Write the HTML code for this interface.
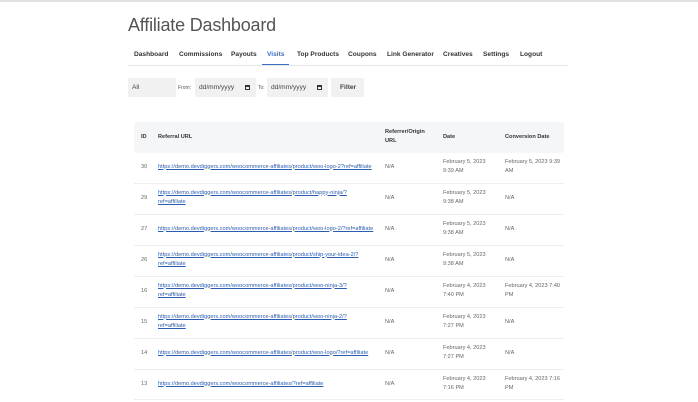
<!DOCTYPE html><html><head><style>
*{margin:0;padding:0;box-sizing:border-box}
body{width:698px;height:400px;background:#fff;font-family:"Liberation Sans",sans-serif;color:#333;position:relative;overflow:hidden}
#w{position:absolute;left:0;top:1.5px;width:698px;height:400px}
.a{position:absolute;white-space:nowrap}
h1{position:absolute;left:128px;top:13px;font-size:18px;font-weight:normal;color:#555;letter-spacing:-.2px}
.nav{position:absolute;top:49px;font-size:6.6px;font-weight:bold;color:#333}
.navline{position:absolute;left:128px;top:63px;width:440px;height:1px;background:#e6e6e6}
.box{position:absolute;top:76px;height:19px;background:#f1f1f1;font-size:6.6px;line-height:19px;padding-left:4px;color:#444}
.thead{position:absolute;left:134px;top:120px;width:430px;height:31px;background:#f5f6f7;border-radius:3px}
.t{position:absolute;font-size:5.6px;line-height:9.5px;color:#666;white-space:nowrap}
.h{font-weight:bold;color:#333}
.u{color:#2a5db0;text-decoration:underline;letter-spacing:.02px}
.sep{position:absolute;left:134px;width:430px;height:1px;background:#eee}
</style></head><body>
<div style="position:absolute;left:0;top:0;width:698px;height:2px;background:#e2e2e2"></div>
<div id="w">
<h1>Affiliate Dashboard</h1>
<div class="nav" style="left:134px">Dashboard</div>
<div class="nav" style="left:179px">Commissions</div>
<div class="nav" style="left:231px">Payouts</div>
<div class="nav" style="left:267px;color:#3a6fc4">Visits</div>
<div style="position:absolute;left:262px;top:62px;width:27px;height:2px;background:#3a6fc4"></div>
<div class="nav" style="left:297px">Top Products</div>
<div class="nav" style="left:348px">Coupons</div>
<div class="nav" style="left:387px">Link Generator</div>
<div class="nav" style="left:443px">Creatives</div>
<div class="nav" style="left:483px">Settings</div>
<div class="nav" style="left:520px">Logout</div>
<div class="navline"></div>
<div class="box" style="left:128px;width:48px">All</div>
<div class="a" style="left:178px;top:83px;font-size:5px;color:#555">From:</div>
<div class="box" style="left:195px;width:61px">dd/mm/yyyy <span style="position:absolute;left:50px;top:7px;width:5px;height:5px;border:1px solid #333;border-top-width:2px"></span></div>
<div class="a" style="left:258px;top:83px;font-size:5px;color:#555">To:</div>
<div class="box" style="left:267px;width:61px">dd/mm/yyyy <span style="position:absolute;left:50px;top:7px;width:5px;height:5px;border:1px solid #333;border-top-width:2px"></span></div>
<div class="box" style="left:331px;width:33px;font-weight:bold;padding-left:9px">Filter</div>
<div class="thead"></div>
<div class="t h" style="left:141px;top:131px">ID</div>
<div class="t h" style="left:158px;top:131px">Referral URL</div>
<div class="t h" style="left:385px;top:126px">Referrer/Origin<br>URL</div>
<div class="t h" style="left:443px;top:131px">Date</div>
<div class="t h" style="left:505px;top:131px">Conversion Date</div>

<div class="t" style="left:141px;top:161px">30</div>
<div class="t u" style="left:158px;top:161px">https://demo.devdiggers.com/woocommerce-affiliates/product/woo-logo-2?ref=affiliate</div>
<div class="t" style="left:385px;top:161px">N/A</div>
<div class="t" style="left:443px;top:156px">February 5, 2023<br>9:39 AM</div>
<div class="t" style="left:505px;top:156px">February 5, 2023 9:39<br>AM</div>
<div class="sep" style="top:181px"></div>

<div class="t" style="left:141px;top:192px">29</div>
<div class="t u" style="left:158px;top:187px">https://demo.devdiggers.com/woocommerce-affiliates/product/happy-ninja/?<br>ref=affiliate</div>
<div class="t" style="left:385px;top:192px">N/A</div>
<div class="t" style="left:443px;top:187px">February 5, 2023<br>9:38 AM</div>
<div class="t" style="left:505px;top:192px">N/A</div>
<div class="sep" style="top:212px"></div>

<div class="t" style="left:141px;top:223px">27</div>
<div class="t u" style="left:158px;top:223px">https://demo.devdiggers.com/woocommerce-affiliates/product/woo-logo-2/?ref=affiliate</div>
<div class="t" style="left:385px;top:223px">N/A</div>
<div class="t" style="left:443px;top:218px">February 5, 2023<br>9:38 AM</div>
<div class="t" style="left:505px;top:223px">N/A</div>
<div class="sep" style="top:243px"></div>

<div class="t" style="left:141px;top:254px">26</div>
<div class="t u" style="left:158px;top:249px">https://demo.devdiggers.com/woocommerce-affiliates/product/ship-your-idea-2/?<br>ref=affiliate</div>
<div class="t" style="left:385px;top:254px">N/A</div>
<div class="t" style="left:443px;top:249px">February 5, 2023<br>9:38 AM</div>
<div class="t" style="left:505px;top:254px">N/A</div>
<div class="sep" style="top:274px"></div>

<div class="t" style="left:141px;top:285px">16</div>
<div class="t u" style="left:158px;top:280px">https://demo.devdiggers.com/woocommerce-affiliates/product/woo-ninja-3/?<br>ref=affiliate</div>
<div class="t" style="left:385px;top:285px">N/A</div>
<div class="t" style="left:443px;top:280px">February 4, 2023<br>7:40 PM</div>
<div class="t" style="left:505px;top:280px">February 4, 2023 7:40<br>PM</div>
<div class="sep" style="top:305px"></div>

<div class="t" style="left:141px;top:316px">15</div>
<div class="t u" style="left:158px;top:311px">https://demo.devdiggers.com/woocommerce-affiliates/product/woo-ninja-2/?<br>ref=affiliate</div>
<div class="t" style="left:385px;top:316px">N/A</div>
<div class="t" style="left:443px;top:311px">February 4, 2023<br>7:27 PM</div>
<div class="t" style="left:505px;top:316px">N/A</div>
<div class="sep" style="top:336px"></div>

<div class="t" style="left:141px;top:347px">14</div>
<div class="t u" style="left:158px;top:347px">https://demo.devdiggers.com/woocommerce-affiliates/product/woo-logo/?ref=affiliate</div>
<div class="t" style="left:385px;top:347px">N/A</div>
<div class="t" style="left:443px;top:342px">February 4, 2023<br>7:27 PM</div>
<div class="t" style="left:505px;top:347px">N/A</div>
<div class="sep" style="top:367px"></div>

<div class="t" style="left:141px;top:378px">13</div>
<div class="t u" style="left:158px;top:378px">https://demo.devdiggers.com/woocommerce-affiliates/?ref=affiliate</div>
<div class="t" style="left:385px;top:378px">N/A</div>
<div class="t" style="left:443px;top:373px">February 4, 2023<br>7:16 PM</div>
<div class="t" style="left:505px;top:373px">February 4, 2023 7:16<br>PM</div>
<div class="sep" style="top:397px"></div>
</div>
</body></html>
